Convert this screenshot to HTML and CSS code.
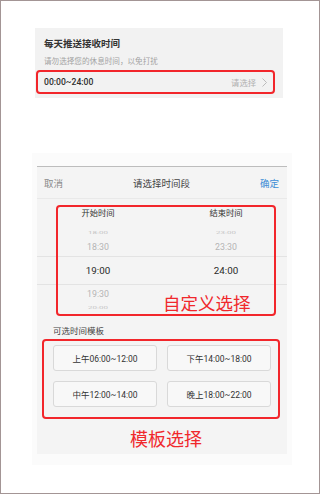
FILE: index.html
```html
<!DOCTYPE html>
<html lang="zh-CN">
<head>
<meta charset="utf-8">
<title>推送接收时间</title>
<link rel="stylesheet" href="styles.css">
</head>
<body>
<div class="frame">
  <div class="card">
    <div class="title">每天推送接收时间</div>
    <div class="subtitle">请勿选择您的休息时间，以免打扰</div>
    <div class="select-box">
      <span class="range">00:00~24:00</span>
      <span class="choose">请选择<svg class="chev" width="5" height="9" viewBox="0 0 5 9"><polyline points="0.5,0.5 4.5,4.5 0.5,8.5" fill="none" stroke="#b5b5b5" stroke-width="0.9"/></svg></span>
    </div>
  </div>

  <div class="sheet-wrap">
    <div class="panel">
      <div class="header">
        <span class="cancel">取消</span>
        <span class="head-title">请选择时间段</span>
        <span class="ok">确定</span>
      </div>
      <div class="picker">
        <div class="row heading"><span>开始时间</span><span>结束时间</span></div>
        <div class="row far"><span>18:00</span><span>23:00</span></div>
        <div class="row near"><span>18:30</span><span>23:30</span></div>
        <div class="row selected"><span>19:00</span><span>24:00</span></div>
        <div class="row near"><span>19:30</span><span></span></div>
        <div class="row far"><span>20:00</span><span></span></div>
        <div class="mark-box">
          <span class="mark-text">自定义选择</span>
        </div>
      </div>
      <div class="tpl-label">可选时间模板</div>
      <div class="tpl-box">
        <div class="tpl-btn">上午06:00~12:00</div>
        <div class="tpl-btn">下午14:00~18:00</div>
        <div class="tpl-btn">中午12:00~14:00</div>
        <div class="tpl-btn">晚上18:00~22:00</div>
      </div>
      <div class="tpl-mark">模板选择</div>
    </div>
  </div>
</div>
</body>
</html>
```

FILE: styles.css
```css
html, body {
  margin: 0;
  padding: 0;
  background: #ffffff;
}

body {
  font-family: Roboto, "Noto Sans CJK SC", sans-serif;
  color: #333333;
}

.frame {
  width: 320px;
  height: 494px;
  box-sizing: border-box;
  border: 1px solid #a39595;
  overflow: hidden;
}

.card {
  margin: 27px 0 0 34px;
  width: 248px;
  height: 70px;
  box-sizing: border-box;
  padding: 10px 0 0 9px;
  background: #f2f2f2;
}

.title {
  font-size: 9.5px;
  line-height: 12px;
  font-weight: 700;
  color: #333333;
}

.subtitle {
  margin-top: 6px;
  font-size: 7.6px;
  line-height: 12px;
  color: #a3a3a3;
}

.select-box {
  margin: 2px 0 0 -8px;
  width: 239px;
  height: 24px;
  box-sizing: border-box;
  border: 2px solid #f2262b;
  border-radius: 4px;
  padding: 0 6px 0 6px;
  display: flex;
  align-items: center;
  justify-content: space-between;
}

.range {
  font-size: 8.6px;
  font-weight: 500;
  color: #2e2e2e;
}

.choose {
  display: flex;
  align-items: center;
  gap: 6px;
  font-size: 8.3px;
  color: #b0b0b0;
}

.chev {
  display: block;
}

.sheet-wrap {
  margin: 55px 0 0 31px;
  width: 260px;
  box-sizing: border-box;
  padding: 13px 5px 11px 5px;
  background: #fbfbfb;
}

.panel {
  width: 250px;
  background: #f4f4f4;
  border-top: 1px solid #bdbdbd;
}

.header {
  height: 32px;
  box-sizing: border-box;
  padding: 0 8px 0 7px;
  display: flex;
  align-items: center;
  justify-content: space-between;
  border-bottom: 1px solid #e9e9e9;
  font-size: 9.5px;
}

.cancel {
  color: #8a8a8a;
}

.head-title {
  color: #444444;
}

.ok {
  color: #3d8ed6;
}

.picker {
  position: relative;
  padding: 8px 0 12px 0;
}

.row {
  display: grid;
  grid-template-columns: 1fr 1fr;
  column-gap: 6px;
  text-align: center;
  align-items: center;
}

.row span {
  display: block;
}

.heading {
  height: 12px;
  font-size: 8.3px;
  line-height: 12px;
  color: #333333;
  margin-bottom: 9px;
}

.far {
  height: 10px;
  font-size: 8px;
  line-height: 10px;
  color: #c4c4c4;
}

.far span {
  transform: scaleY(0.55);
}

.near {
  height: 18px;
  font-size: 8.8px;
  line-height: 18px;
  color: #b4b4b4;
}

.selected {
  height: 27px;
  border-top: 1px solid #e3e3e3;
  border-bottom: 1px solid #e3e3e3;
  font-size: 9.8px;
  line-height: 27px;
  color: #2a2a2a;
}

.mark-box {
  position: absolute;
  left: 19px;
  top: 6px;
  width: 220px;
  height: 111px;
  box-sizing: border-box;
  border: 2px solid #f2262b;
  border-radius: 4px;
}

.mark-text {
  position: absolute;
  left: 105px;
  top: 86px;
  font-size: 17.5px;
  line-height: 22px;
  color: #f0282c;
  white-space: nowrap;
}

.tpl-label {
  padding-left: 16px;
  font-size: 8.5px;
  line-height: 12px;
  color: #444444;
}

.tpl-box {
  margin: 2px 0 0 5px;
  width: 238px;
  box-sizing: border-box;
  border: 2px solid #f2262b;
  border-radius: 4px;
  padding: 4px 7px 10px 9px;
  display: grid;
  grid-template-columns: 104px 104px;
  column-gap: 10px;
  row-gap: 10px;
}

.tpl-btn {
  height: 26px;
  box-sizing: border-box;
  border: 1px solid #d9d9d9;
  border-radius: 3px;
  background: #f8f8f8;
  display: flex;
  align-items: center;
  justify-content: center;
  font-size: 8.5px;
  color: #333333;
}

.tpl-mark {
  margin-top: 10px;
  padding: 0 0 3px 8px;
  text-align: center;
  font-size: 18px;
  line-height: 22px;
  color: #f0282c;
}
```
